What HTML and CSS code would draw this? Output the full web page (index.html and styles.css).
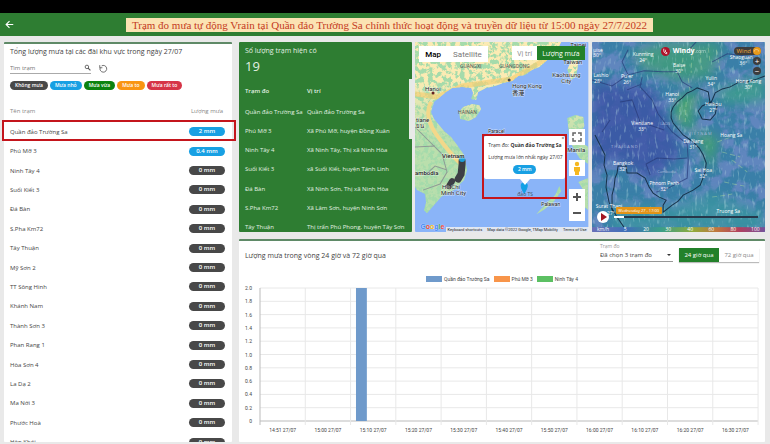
FILE: index.html
```
<!DOCTYPE html>
<html lang="vi">
<head>
    <meta charset="UTF-8">
    <meta name="viewport" content="width=device-width, initial-scale=1.0">
    <title>Vrain</title>
    <link rel="stylesheet" href="styles.css">
</head>
<body>
    <header class="topbar">
        <button class="back" type="button" aria-label="Quay lại">
            <svg viewBox="0 0 24 24"><path d="M22 12H4M12 3l-9 9 9 9" fill="none" stroke="#fff" stroke-width="3"/></svg>
        </button>
        <h1 class="banner">Trạm đo mưa tự động Vrain tại Quần đảo Trường Sa chính thức hoạt động và truyền dữ liệu từ 15:00 ngày 27/7/2022</h1>
    </header>

    <main class="dashboard">
        <section class="card rain-card">
            <div class="rain-body">
                <h2>Tổng lượng mưa tại các đài khu vực trong ngày 27/07</h2>
                <form class="search">
                    <div class="search-field">
                        <input type="text" id="search" placeholder="Tìm trạm" aria-label="Tìm trạm">
                        <svg viewBox="0 0 12 12"><circle cx="5" cy="5" r="3" fill="none" stroke="#555" stroke-width="1.5"/><path d="M7 7l4 4" stroke="#555" stroke-width="2"/></svg>
                    </div>
                    <button type="reset" class="reset" aria-label="Làm mới">
                        <svg viewBox="0 0 24 24"><path d="M7 5a9 9 0 1 1-4 5" fill="none" stroke="#444" stroke-width="2"/><path d="M2 3v7h7" fill="none" stroke="#444" stroke-width="2"/></svg>
                    </button>
                </form>
                <div class="chips">
                    <span class="chip none">Không mưa</span>
                    <span class="chip light">Mưa nhỏ</span>
                    <span class="chip medium">Mưa vừa</span>
                    <span class="chip heavy">Mưa to</span>
                    <span class="chip extreme">Mưa rất to</span>
                </div>
                <table class="rain-table">
                    <thead>
                        <tr><th>Tên trạm</th><th class="amount">Lượng mưa</th></tr>
                    </thead>
                    <tbody id="rainRows"></tbody>
                </table>
            </div>
            <div class="highlight"></div>
        </section>

        <div class="right">
            <div class="top-row">
                <section class="stations">
                    <h2>Số lượng trạm hiện có</h2>
                    <p class="count">19</p>
                    <table class="station-table">
                        <thead>
                            <tr><th>Trạm đo</th><th>Vị trí</th></tr>
                        </thead>
                        <tbody id="stationRows"></tbody>
                    </table>
                    <div class="scroll-thumb"></div>
                </section>

                <section class="map">
                    <svg class="map-canvas" viewBox="0 0 173 190" preserveAspectRatio="xMidYMid slice">
                        <defs>
                            <filter id="terrain" x="0" y="0" width="100%" height="100%">
                                <feTurbulence type="fractalNoise" baseFrequency="0.22" numOctaves="3" seed="4"/>
                                <feColorMatrix values="0 0 0 0 .97  0 0 0 0 .83  0 0 0 0 .45  7 0 0 0 -2.9"/>
                            </filter>
                            <linearGradient id="fade" x1="0" y1="0" x2="0" y2="1">
                                <stop offset="0.2" stop-color="#fff"/>
                                <stop offset="0.5" stop-color="#444"/>
                                <stop offset="1" stop-color="#333"/>
                            </linearGradient>
                            <mask id="northFade"><rect width="173" height="190" fill="url(#fade)"/></mask>
                            <clipPath id="land">
                                <path d="M0 0H146L142 8 137 15 131 19 125 25 117 28 110 33 103 34 97 39 88 41 80 44 71 46 63 50 61 58 56 57 58 51 56 46 47 45 37 46 31 50 25 55 19 60 16 70 19 77 24 83 29 89 36 95 42 103 49 113 52 128 49 138 39 148 32 151 26 155 19 163 12 171 9 168 11 160 10 152 2 148 0 145Z"/>
                                <path d="M44 70L48 65 57 62 64 63 66 67 61 75 54 79 45 77Z"/>
                                <path d="M164 14L157 16 152 28 156 38 161 34Z"/>
                                <path d="M152 76L160 73 168 75 169 84 165 92 167 101 173 105V122L164 116 157 104 154 96Z"/>
                                <path d="M144 144L146 149 138 160 128 168 121 172 132 160 140 153Z"/>
                                <path d="M173 136L163 140 168 148 160 157 173 168Z"/>
                            </clipPath>
                        </defs>
                        <rect width="173" height="190" fill="#8ab4f8"/>
                        <g clip-path="url(#land)">
                            <rect width="173" height="190" fill="#a5dbab"/>
                            <g mask="url(#northFade)"><rect width="173" height="190" filter="url(#terrain)"/></g>
                            <path d="M16 60Q8 75 23 95T46 122" fill="none" stroke="#f3d88a" stroke-width="4"/>
                            <path d="M0 52L22 55 47 44 97 37 136 14" fill="none" stroke="#f5cf75" stroke-width="5" opacity=".7"/>
                            <path d="M0 85L13 98 27 112 32 130 25 142 8 148M0 105L20 104M32 128L20 124 10 133" fill="none" stroke="#8f9b96" stroke-width="1"/>
                        </g>
                        <g class="rain-dots">
                            <path d="M47 119V122L46 132 43 137" fill="none" stroke="#3d3f45" stroke-width="7" stroke-linecap="round"/>
                            <path d="M37 139L34 144" stroke="#3d3f45" stroke-width="6" stroke-linecap="round"/>
                            <circle cx="47" cy="117" r="3" fill="#1b9fd8"/>
                        </g>
                        <g class="place">
                            <text x="155" y="5">Taipei</text>
                            <text x="148" y="22">Taiwan</text>
                            <text x="137" y="35">Kaohsiung</text>
                            <text x="146" y="41">City</text>
                            <text x="97" y="46">Hong Kong</text>
                            <text x="97" y="53" class="cjk">香港</text>
                            <text x="10" y="49">Hanoi</text>
                            <text x="1" y="80">tiane</text>
                            <text x="1" y="86">ยน</text>
                            <text x="27" y="116" class="big">Vietnam</text>
                            <text x="0" y="133" class="big">ambodia</text>
                            <text x="27" y="147">Ho Chi</text>
                            <text x="26" y="153">Minh City</text>
                            <text x="152" y="110">Manila</text>
                            <text x="73" y="91" class="small">Paracel</text>
                            <text x="126" y="164" class="small">Palawan</text>
                        </g>
                        <g class="region">
                            <text x="45" y="26">GUANGXI</text>
                            <text x="84" y="26">GUANGDONG</text>
                            <text x="43" y="72">HAINAN</text>
                        </g>
                        <circle cx="18" cy="51" r="1.5" fill="#622"/>
                        <circle cx="94" cy="38" r="1.5" fill="#444"/>
                        <path d="M109 151c-4-6-4-10 0-10s4 4 0 10z" fill="#12a0e6" stroke="#12a0e6"/>
                    </svg>
                    <div class="map-type">
                        <button type="button" class="active">Map</button>
                        <button type="button">Satellite</button>
                    </div>
                    <div class="map-mode">
                        <button type="button">Vị trí</button>
                        <button type="button" class="selected">Lượng mưa</button>
                    </div>
                    <div class="popup-frame">
                        <div class="popup">
                            <span class="close">×</span>
                            <p>Trạm đo: <b>Quần đảo Trường Sa</b></p>
                            <p>Lượng mưa lớn nhất ngày 27/07</p>
                            <span class="pill light">2 mm</span>
                        </div>
                        <span class="pin-label">đảo TS</span>
                    </div>
                    <div class="map-controls">
                        <button type="button" aria-label="Toàn màn hình"><svg viewBox="0 0 16 16"><path d="M4 7V4h3M9 4h3v3M12 9v3H9M7 12H4V9" fill="none" stroke="#666" stroke-width="1.5"/></svg></button>
                        <button type="button" class="pegman" aria-label="Street View"><svg viewBox="0 0 16 16"><circle cx="8" cy="4" r="2.2" fill="#f5b81f"/><path d="M5 7h6v4l-1 1v3H6v-3l-1-1z" fill="#f5b81f"/></svg></button>
                        <div class="zoom">
                            <button type="button" aria-label="Phóng to"><svg viewBox="0 0 16 16"><path d="M8 4v8M4 8h8" stroke="#555" stroke-width="2"/></svg></button>
                            <button type="button" aria-label="Thu nhỏ"><svg viewBox="0 0 16 16"><path d="M4 8h8" stroke="#555" stroke-width="2"/></svg></button>
                        </div>
                    </div>
                    <span class="google"><i class="b">G</i><i class="r">o</i><i class="y">o</i><i class="b">g</i><i class="g">l</i><i class="r">e</i></span>
                    <div class="credits"><span>Keyboard shortcuts</span><span>Map data ©2022 Google, TMap Mobility</span><a href="#">Terms of Use</a></div>
                </section>

                <section class="wind">
                    <svg class="map-canvas" viewBox="0 0 173 190" preserveAspectRatio="xMidYMid slice">
                        <defs>
                            <filter id="windField" x="0" y="0" width="100%" height="100%">
                                <feTurbulence type="fractalNoise" baseFrequency="0.07" numOctaves="4" seed="11"/>
                                <feColorMatrix values="0 0 0 0 .24  0 0 0 0 .27  0 0 0 0 .66  5 0 0 0 -2.1"/>
                            </filter>
                            <filter id="streaks" x="0" y="0" width="100%" height="100%">
                                <feTurbulence type="fractalNoise" baseFrequency="0.35 0.12" numOctaves="2" seed="3"/>
                                <feColorMatrix values="0 0 0 0 .55  0 0 0 0 .8  0 0 0 0 .8  4 0 0 0 -2.3"/>
                            </filter>
                            <filter id="soft" x="-50%" y="-50%" width="200%" height="200%"><feGaussianBlur stdDeviation="6"/></filter>
                            <linearGradient id="speed">
                                <stop offset="0" stop-color="#6a6fb8"/>
                                <stop offset=".2" stop-color="#3f6fb8"/>
                                <stop offset=".4" stop-color="#3c9f87"/>
                                <stop offset=".58" stop-color="#8fab3c"/>
                                <stop offset=".72" stop-color="#c0763f"/>
                                <stop offset=".85" stop-color="#b0405f"/>
                                <stop offset="1" stop-color="#74539c"/>
                            </linearGradient>
                        </defs>
                        <rect width="173" height="190" fill="#3a7fa8"/>
                        <rect width="173" height="190" filter="url(#windField)" opacity=".5"/>
                        <g filter="url(#soft)" opacity=".8">
                            <path d="M40 10L70 0H130L120 35 90 40 50 28Z" fill="#3f9f78"/>
                            <path d="M85 55L110 50 100 65 100 90 125 95 118 130 110 100 82 75Z" fill="#45ad5e"/>
                            <path d="M118 50L173 32V60L135 62Z" fill="#3da08a"/>
                            <path d="M20 160L75 165 120 150 173 170V190H20Z" fill="#3a96a0"/>
                            <path d="M0 40L60 45 75 75 90 110 60 140 20 115 0 130Z" fill="#3c52a6"/>
                        </g>
                        <rect width="173" height="190" filter="url(#streaks)" opacity=".35"/>
                        <path class="streams" d="M92 8l-3 20M100 5l-1 26M108 8l1 20M116 6l2 16M124 8l4 22M96 36l2 14M88 65l-1 14M94 60l-1 20M130 110l18 5M140 118l15 12M132 140l20 4M120 155l20-3M125 100l14-5"/>
                        <path class="coast" d="M173 34L165 37 155 40 147 40 138 45 130 47 123 51 120 58 118 62 116 50 111 48 105 46 100 49 95 51 90 56 85 60 81 65 79 70 79 76 81 81 86 87 91 93 101 100 107 106 111 113 114 121 113 130 108 143 101 148 91 153 86 159 80 163 71 170 71 163 74 158 67 155 61 151 57 145 53 136 45 131 35 131 34 124 26 124 25 131 23 136 22 145 20 153 20 166 25 175 34 188M3 93L8 103 13 113 12 123 15 133 14 145 17 160 21 170"/>
                        <path class="coast" d="M106 69L110 64 118 60 125 63 123 72 118 78 110 77Z"/>
                        <path class="border" d="M0 38L20 44 36 33 52 29 70 30 85 30 90 40 100 46M50 35L48 45 60 58 66 72 80 90 95 102 96 118 95 136 76 146 64 150M35 48L50 42M58 133L54 122 65 116 82 117 95 116M28 60L40 58 48 80 72 88M18 78L10 90"/>
                        <path class="border" d="M36 33L30 20 36 8M120 20L135 12 160 15M95 10L104 0"/>
                        <g class="wind-label">
                            <text x="6" y="10">uise</text><text x="5" y="15">30°</text>
                            <text x="51" y="14">Kunming</text><text x="51" y="20">24°</text>
                            <text x="87" y="25">Baise</text><text x="87" y="31">30°</text>
                            <text x="35" y="36">Pu'er</text><text x="35" y="42">26°</text>
                            <text x="9" y="35">Lashio</text><text x="6" y="41">28°</text>
                            <text x="119" y="38">Yulin</text><text x="119" y="44">34°</text>
                            <text x="80" y="54">Hanoi</text><text x="80" y="60">33°</text>
                            <text x="156" y="41">Hong Kong</text><text x="156" y="47">30°</text>
                            <text x="149" y="17">Shaoguan</text><text x="151" y="23">36°</text>
                            <text x="121" y="64">Haikou</text><text x="121" y="70">27°</text>
                            <text x="50" y="83">Vientiane</text><text x="50" y="89">33°</text>
                            <text x="139" y="95">Hoang Sa</text>
                            <text x="101" y="101">Da Nang</text><text x="101" y="107">31°</text>
                            <text x="31" y="123">Bangkok</text><text x="31" y="129">32°</text>
                            <text x="111" y="130">Sai Hoa</text><text x="111" y="136">32°</text>
                            <text x="72" y="143">Phnom Penh</text><text x="72" y="149">32°</text>
                            <text x="17" y="166">Surat Thani</text><text x="19" y="173">27°</text>
                            <text x="136" y="171">Truong Sa</text>
                        </g>
                        <g class="country">
                            <text x="19" y="106">T H A I L A N D</text>
                            <text x="65" y="131">Cambodia</text>
                            <text x="68" y="83">LAOS</text>
                            <text x="96" y="93">V I E T N A M</text>
                        </g>
                        <rect y="185" width="173" height="5" fill="url(#speed)"/>
                        <g class="scale"><text x="11" y="189">km/h</text><text x="33" y="189">5</text><text x="54" y="189">20</text><text x="76" y="189">30</text><text x="98" y="189">40</text><text x="119" y="189">60</text><text x="141" y="189">80</text><text x="163" y="189">100</text></g>
                    </svg>
                    <div class="windy-logo">
                        <svg viewBox="0 0 16 16"><circle cx="8" cy="8" r="8" fill="#b01228"/><path d="M5 3c-1 5 1 9 6 9M8 5c-1 3 0 5 3 5" fill="none" stroke="#fff" stroke-width="1.5"/></svg>
                        <b>Windy</b><span>.com</span>
                    </div>
                    <div class="wind-controls">
                        <button type="button" class="layer">Wind <i>◠</i></button>
                        <button type="button" class="round">+</button>
                        <button type="button" class="round">−</button>
                    </div>
                    <div class="timeline">
                        <button type="button" class="play" aria-label="Phát"><svg viewBox="0 0 12 12"><path d="M4 2l6 4-6 4z" fill="#a3141f"/></svg></button>
                        <div class="track"><span class="time">Wednesday 27 - 17:00</span></div>
                    </div>
                </section>
            </div>

            <section class="card chart-card">
                <div class="chart-head">
                    <h2>Lượng mưa trong vòng 24 giờ và 72 giờ qua</h2>
                    <div class="select-field">
                        <label for="station">Trạm đo</label>
                        <select id="station"><option>Đã chọn 3 trạm đo</option></select>
                    </div>
                    <div class="range">
                        <button type="button" class="selected">24 giờ qua</button>
                        <button type="button">72 giờ qua</button>
                    </div>
                </div>
                <div class="legend">
                    <span><i class="s1"></i>Quần đảo Trường Sa</span>
                    <span><i class="s2"></i>Phú Mỡ 3</span>
                    <span><i class="s3"></i>Ninh Tây 4</span>
                </div>
                <div class="chart"><svg id="chart"></svg></div>
            </section>
        </div>
    </main>
    <script src="script.js"></script>
</body>
</html>
```
FILE: styles.css
```
* {
    box-sizing: border-box;
}

body {
    margin: 0;
    height: 100vh;
    display: flex;
    flex-direction: column;
    overflow: hidden;
    background-color: #e9e9e9;
    border-top: 13px solid #000;
    font-family: "Open Sans", "Noto Sans", sans-serif;
    font-size: 6px;
    color: #444;
}

h1, h2, p {
    margin: 0;
    font-weight: normal;
}

button, input, select {
    font: inherit;
    color: inherit;
    border: none;
    padding: 0;
    margin: 0;
    background: none;
    cursor: pointer;
}

svg {
    display: block;
}

i {
    font-style: normal;
}

h2 {
    font-size: 7px;
    line-height: 10px;
}

table {
    border-collapse: collapse;
    width: 100%;
}

th, td {
    padding: 0;
    text-align: left;
    font-weight: normal;
    white-space: nowrap;
}

/* header */
.topbar {
    display: flex;
    align-items: center;
    flex: none;
    height: 23px;
    padding: 0 5px;
    background-color: #2e7d32;
}

.back svg {
    width: 9px;
    height: 9px;
}

.banner {
    margin: 0 auto;
    padding: 0 6px;
    background-color: #fbe3b3;
    color: #c43a22;
    font-family: "Liberation Serif", serif;
    font-size: 11px;
    line-height: 14px;
    white-space: nowrap;
}

.dashboard {
    flex: 1;
    min-height: 0;
    display: grid;
    grid-template-columns: minmax(0, 13fr) minmax(0, 30fr);
    gap: 7px;
    padding: 6px 5px 2px 4px;
}

.card {
    background-color: #fff;
    border-top: 2px solid #5f8a67;
    border-radius: 1px;
    position: relative;
    min-height: 0;
}

/* rain list */
.rain-body {
    height: 100%;
    overflow: hidden;
    padding: 3px 7px 0 6px;
}

.search {
    display: flex;
    align-items: center;
    gap: 8px;
    margin-top: 5px;
}

.search-field {
    display: flex;
    align-items: center;
    width: 81px;
    height: 12px;
    border-bottom: 1px solid #aaa;
}

.search-field input {
    flex: 1;
    min-width: 0;
    outline: none;
}

.search-field svg {
    width: 7px;
    height: 7px;
}

.reset svg {
    width: 9px;
    height: 9px;
}

.chips {
    display: flex;
    gap: 2px;
    margin-top: 7px;
}

.chip, .pill {
    border-radius: 5px;
    height: 9px;
    line-height: 9px;
    text-align: center;
    color: #fff;
    font-weight: 600;
}

.chip {
    padding: 0 5px;
    font-size: 5px;
}

.none { background-color: #484848; }
.light { background-color: #18a0e3; }
.medium { background-color: #0b830f; }
.heavy { background-color: #f99512; }
.extreme { background-color: #d63447; }

.rain-table {
    height: 352px;
    margin-top: 10px;
}

.rain-table .amount {
    width: 36px;
    text-align: center;
}

.rain-table th {
    height: 22px;
    color: #888;
}

.pill {
    display: block;
    width: 36px;
    font-size: 6px;
}

.highlight {
    position: absolute;
    top: 76px;
    left: -2px;
    right: -4px;
    height: 21px;
    border: 2px solid #c4151c;
}

/* right side */
.right {
    display: grid;
    grid-template-rows: 190px 1fr;
    gap: 7px;
    min-width: 0;
    min-height: 0;
}

.top-row {
    display: grid;
    grid-template-columns: repeat(3, minmax(0, 1fr));
    gap: 3px;
}

.stations, .map, .wind {
    position: relative;
    overflow: hidden;
    border-radius: 1px;
}

.stations {
    background-color: #2e7d32;
    color: #e3f1e3;
    padding: 4px 6px 0;
}

.count {
    font-size: 13px;
    line-height: 20px;
}

.station-table {
    height: 157px;
    margin-top: 4px;
}

.station-table th {
    height: 22px;
    font-weight: 600;
}

.station-table th:first-child {
    width: 62px;
}

.scroll-thumb {
    position: absolute;
    right: 0;
    top: 37px;
    width: 3px;
    height: 60px;
    background-color: #e6ebe6;
}

/* google map */
.map-canvas {
    width: 100%;
    height: 190px;
}

.place {
    font-family: Roboto, sans-serif;
    font-size: 6px;
    fill: #222;
    paint-order: stroke;
    stroke: rgba(255, 255, 255, 0.6);
    stroke-width: 1px;
}

.place .cjk {
    font-family: "Noto Sans CJK TC", sans-serif;
}

.place .big {
    font-weight: 500;
}

.place .small {
    font-size: 5px;
}

.region {
    font-family: Roboto, sans-serif;
    font-size: 5px;
    fill: #555;
}

.map-type, .map-mode {
    position: absolute;
    top: 4px;
    display: flex;
    background-color: #fff;
}

.map-type {
    left: 4px;
    height: 16px;
    font-family: Roboto, sans-serif;
    font-size: 8px;
}

.map-type button {
    padding: 0 6px;
    color: #777;
}

.map-type .active {
    color: #000;
    font-weight: 500;
}

.map-mode {
    right: 4px;
    height: 14px;
    font-size: 7px;
    color: #888;
}

.map-mode button {
    padding: 0 5px;
}

.map-mode .selected, .range .selected {
    background-color: #22812a;
    color: #fff;
}

.popup-frame {
    position: absolute;
    left: 67px;
    top: 92px;
    width: 85px;
    height: 65px;
    border: 2px solid #c4151c;
}

.popup {
    position: relative;
    height: 43px;
    padding: 5px 4px;
    background-color: #fff;
    border-radius: 2px;
    font-size: 5px;
    line-height: 8px;
    text-align: center;
    white-space: nowrap;
    color: #333;
}

.popup::after {
    content: "";
    position: absolute;
    left: 36px;
    bottom: -6px;
    border: 5px solid transparent;
    border-top: 6px solid #fff;
    border-bottom: 0;
}

.popup p + p {
    margin-top: 4px;
}

.popup .pill {
    width: 23px;
    margin: 4px auto 0;
    font-size: 5px;
}

.popup .close {
    position: absolute;
    right: 1px;
    top: -2px;
}

.pin-label {
    position: absolute;
    left: 33px;
    bottom: 0;
    font-size: 5px;
    line-height: 6px;
    color: #456;
}

.map-controls {
    position: absolute;
    right: 4px;
    top: 87px;
    display: flex;
    flex-direction: column;
    gap: 15px;
    width: 16px;
}

.map-controls button {
    display: block;
    width: 16px;
    height: 16px;
    background-color: #fff;
}

.map-controls .zoom {
    margin-top: -2px;
}

.google {
    position: absolute;
    left: 5px;
    bottom: 0;
    font: bold 7px/10px "Liberation Sans", sans-serif;
    text-shadow: 0 0 1px #fff;
}

.google .b { color: #4285f4; }
.google .r { color: #ea4335; }
.google .y { color: #fbbc05; }
.google .g { color: #34a853; }

.credits {
    position: absolute;
    right: 0;
    bottom: 0;
    display: flex;
    gap: 5px;
    padding: 0 2px;
    background-color: rgba(240, 240, 240, 0.85);
    font: 4px/5px Roboto, sans-serif;
    white-space: nowrap;
    color: #222;
}

.credits a {
    color: inherit;
    text-decoration: none;
}

/* windy map */
.coast {
    fill: none;
    stroke: #17324a;
    stroke-width: 1px;
}

.border {
    fill: none;
    stroke: #283a78;
    stroke-width: 1px;
    opacity: 0.7;
}

.streams {
    fill: none;
    stroke: #a6d4a0;
    stroke-width: 1px;
    stroke-dasharray: 5 3;
    opacity: 0.5;
}

.wind-label, .country, .scale {
    font-size: 5px;
    fill: #fff;
    text-anchor: middle;
}

.country {
    fill: #a9b9dc;
    text-anchor: start;
    font-size: 4px;
}

.windy-logo {
    position: absolute;
    top: 4px;
    left: 69px;
    display: flex;
    align-items: center;
    color: #fff;
    font-size: 7px;
    line-height: 10px;
}

.windy-logo svg {
    width: 9px;
    height: 9px;
    margin-right: 3px;
}

.windy-logo span {
    font-size: 5px;
    opacity: 0.6;
}

.wind-controls {
    position: absolute;
    top: 5px;
    right: 4px;
    display: flex;
    flex-direction: column;
    align-items: flex-end;
    gap: 2px;
}

.wind-controls button {
    display: flex;
    align-items: center;
    justify-content: center;
    height: 8px;
    border-radius: 4px;
    background-color: #3d3d3d;
    color: #fff;
}

.wind-controls .layer {
    gap: 2px;
    padding-left: 3px;
    color: #f0a83c;
}

.layer i {
    width: 8px;
    height: 8px;
    line-height: 8px;
    border-radius: 4px;
    background-color: #e79a1c;
    color: #fff;
}

.wind-controls .round {
    width: 8px;
    font-size: 8px;
    line-height: 8px;
}

.timeline {
    position: absolute;
    left: 5px;
    right: 7px;
    bottom: 9px;
    display: flex;
    align-items: center;
    gap: 5px;
}

.play {
    width: 12px;
    height: 12px;
    border-radius: 50%;
    background-color: #fff;
}

.track {
    position: relative;
    flex: 1;
    height: 2px;
    background: linear-gradient(to right, #fff 10px, #26384a 10px);
}

.time {
    position: absolute;
    left: 2px;
    bottom: 4px;
    width: 46px;
    border-radius: 1px;
    background-color: #e39418;
    color: #fff;
    font-size: 4px;
    line-height: 7px;
    text-align: center;
    white-space: nowrap;
}

/* chart */
.chart-card {
    display: flex;
    flex-direction: column;
    padding: 5px 6px 0;
}

.chart-head {
    display: flex;
    align-items: flex-start;
}

.chart-head h2 {
    flex: 1;
    margin-top: 5px;
}

.select-field {
    width: 73px;
    margin-right: 6px;
    border-bottom: 1px solid #999;
    position: relative;
}

.select-field::after {
    content: "";
    position: absolute;
    right: 2px;
    bottom: 5px;
    border: 2px solid transparent;
    border-top-color: #333;
    border-bottom: 0;
}

.select-field label {
    display: block;
    font-size: 5px;
    line-height: 5px;
    margin-top: -2px;
    color: #999;
}

.select-field select {
    appearance: none;
    display: block;
    width: 100%;
    height: 12px;
}

.range {
    display: flex;
    height: 14px;
    margin-top: 2px;
    box-shadow: 0 1px 1px #bbb;
    color: #888;
}

.range button {
    width: 40px;
}

.legend {
    display: flex;
    justify-content: center;
    gap: 4px;
    margin: 13px 0 5px;
    font: 5px/8px Roboto, sans-serif;
    color: #444;
}

.legend span {
    display: flex;
    align-items: center;
    gap: 2px;
}

.legend i {
    width: 16px;
    height: 6px;
}

.legend .s1 { background-color: #6f9acb; }
.legend .s2 { background-color: #f8954a; }
.legend .s3 { background-color: #5cc063; }

.chart {
    flex: 1;
    min-height: 0;
    padding: 0 1px 21px 15px;
}

.chart svg {
    width: 100%;
    height: 100%;
    overflow: visible;
    font: 5px Roboto, sans-serif;
    fill: #444;
}

.grid {
    stroke: #e8e8e8;
}

.axis {
    stroke: #bbb;
}

.bar {
    fill: #6f9acb;
}
```
FILE: script.js
```
const rain = [
    ['Quần đảo Trường Sa', 2], ['Phú Mỡ 3', 0.4], ['Ninh Tây 4', 0], ['Suối Kiết 3', 0],
    ['Đá Bàn', 0], ['S.Pha Km72', 0], ['Tây Thuận', 0], ['Mỹ Sơn 2', 0],
    ['TT Sông Hinh', 0], ['Khánh Nam', 0], ['Thành Sơn 3', 0], ['Phan Rang 1', 0],
    ['Hòa Sơn 4', 0], ['La Dạ 2', 0], ['Ma Nới 3', 0], ['Phước Hoà', 0], ['Hòn Khói', 0]
];

const stations = [
    ['Quần đảo Trường Sa', 'Quần đảo Trường Sa'],
    ['Phú Mỡ 3', 'Xã Phú Mỡ, huyện Đồng Xuân'],
    ['Ninh Tây 4', 'Xã Ninh Tây, Thị xã Ninh Hòa'],
    ['Suối Kiết 3', 'xã Suối Kiết, huyện Tánh Linh'],
    ['Đá Bàn', 'Xã Ninh Sơn, Thị xã Ninh Hòa'],
    ['S.Pha Km72', 'Xã Lâm Sơn, huyện Ninh Sơn'],
    ['Tây Thuận', 'Thị trấn Phú Phong, huyện Tây Sơn']
];

document.getElementById('rainRows').innerHTML = rain.map(([name, mm]) =>
    `<tr><td>${name}</td><td><span class="pill ${mm > 0 ? 'light' : 'none'}">${mm} mm</span></td></tr>`
).join('');

document.getElementById('stationRows').innerHTML = stations.map(([name, place]) =>
    `<tr><td>${name}</td><td>${place}</td></tr>`
).join('');

// Rain chart
const times = ['14:51', '15:00', '15:10', '15:20', '15:30', '15:40', '15:50', '16:00', '16:10', '16:20', '16:30'];
const values = [0, 0, 2, 0, 0, 0, 0, 0, 0, 0, 0];
const max = 2;
const step = 100 / times.length;
let out = '';

for (let i = 0; i <= 10; i++) {
    const y = i * 10;
    const value = max - i * 0.2;
    out += `<line class="${i === 10 ? 'axis' : 'grid'}" x1="0" x2="100%" y1="${y}%" y2="${y}%"/>`;
    out += `<text x="-8" y="${y}%" dy="2" text-anchor="end">${i === 10 ? 0 : value.toFixed(1)}</text>`;
}
for (let i = 0; i <= times.length; i++) {
    out += `<line class="${i === 0 ? 'axis' : 'grid'}" x1="${i * step}%" x2="${i * step}%" y1="0" y2="103%"/>`;
}
times.forEach((time, i) => {
    const h = values[i] / max * 100;
    out += `<text x="${(i + 0.5) * step}%" y="100%" dy="11" text-anchor="middle">${time} 27/07</text>`;
    out += `<rect class="bar" x="${(i + 0.12) * step}%" y="${100 - h}%" width="${step * 0.24}%" height="${h}%"/>`;
});
document.getElementById('chart').innerHTML = out;
```
